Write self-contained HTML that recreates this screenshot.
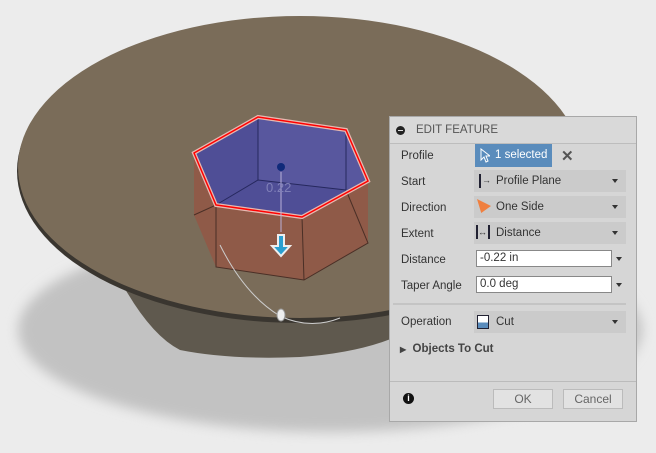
<!DOCTYPE html>
<html><head><style>
body{margin:0;width:656px;height:453px;overflow:hidden;background:#ececec;font-family:"Liberation Sans",sans-serif;position:relative}
svg.bg{position:absolute;left:0;top:0}
.p{position:absolute;left:389px;top:116px;width:248px;height:306px;background:#d6d6d6;border:1px solid #a8a8a8;box-sizing:border-box;font-size:11.5px;color:#333}
.hd{height:26px;border-bottom:1px solid #bdbdbd;background:#d9d9d9;line-height:26px;padding-left:26px;color:#555}
.hd:before{content:"";position:absolute;left:6px;top:9px;width:9px;height:9px;border-radius:50%;background:#222}
.hd:after{content:"";position:absolute;left:8px;top:13px;width:5px;height:1px;background:#ddd}
.l{position:absolute;left:11px}
.dd{position:absolute;left:84px;width:152px;height:22px;background:#cbcbcb;line-height:22px;padding-left:22px;box-sizing:border-box}
.dd:after{content:"";position:absolute;right:8px;top:9px;border:3px solid transparent;border-top:4px solid #333}
.in{position:absolute;left:86px;width:136px;height:17px;background:#fff;border:1px solid #888;box-sizing:border-box;line-height:15px;padding-left:3px}
.ar{position:absolute;left:226px;border:3px solid transparent;border-top:4px solid #333}
.btn{position:absolute;top:272px;height:18px;border:1px solid #bbb;background:#e2e2e2;line-height:18px;text-align:center;color:#666;font-size:12px}
</style></head><body>
<svg class="bg" width="656" height="453">
<defs><filter id="b"><feGaussianBlur stdDeviation="6"/></filter></defs>
<ellipse cx="330" cy="330" rx="312" ry="102" fill="#c2c2c2" filter="url(#b)"/>
<path d="M120 280 Q150 335 180 350 Q230 360 300 357 Q370 352 410 330 L410 250Z" fill="#5f594e"/>
<ellipse cx="300" cy="171" rx="283" ry="152" fill="#3a3630"/>
<ellipse cx="300" cy="167" rx="282" ry="151" fill="#7a6c59"/>
<polygon points="194,153 194,215 216,267 304,280 368,243 368,181 302,217 216,205" fill="#8f5a48"/>
<polyline points="194,215 216,205 216,267 304,280 368,243 346,190" fill="none" stroke="#4a2f26"/>
<line x1="302" y1="217" x2="304" y2="280" stroke="#4a2f26"/>
<polygon points="194,153 258,117 346,130 368,181 302,217 216,205" fill="#4f4e96"/>
<polygon points="258,117 346,130 368,181 346,190 258,180" fill="#58579e"/>
<polyline points="216,205 258,180 346,190" fill="none" stroke="#26285e"/>
<line x1="258" y1="117" x2="258" y2="180" stroke="#26285e"/>
<line x1="346" y1="130" x2="346" y2="190" stroke="#26285e"/>
<polygon points="194,153 258,117 346,130 368,181 302,217 216,205" fill="none" stroke="#e8b8b0" stroke-width="4"/>
<polygon points="194,153 258,117 346,130 368,181 302,217 216,205" fill="none" stroke="#f00" stroke-width="1.5"/>
<circle cx="281" cy="167" r="4" fill="#102a7a"/>
<line x1="281" y1="172" x2="281" y2="232" stroke="#b8b0d8" stroke-width="1"/>
<text x="266" y="192" font-family="Liberation Sans" font-size="13" fill="#8080b8">0.22</text>
<path d="M220 245 Q245 295 280 316 Q310 330 340 318" fill="none" stroke="#ccc" stroke-width="1"/>
<ellipse cx="281" cy="315" rx="4" ry="6" fill="#eee" stroke="#999"/>
<path d="M278 235 h6 v11 h6 l-9 10 l-9 -10 h6z" fill="#2a9fd0" stroke="#eee" stroke-width="2"/>
</svg>
<div class="p">
<div class="hd">EDIT FEATURE</div>
<div class="l" style="top:33px">Profile</div>
<div style="position:absolute;left:85px;top:27px;width:77px;height:23px;background:#5a8cbc;color:#fff;line-height:23px;padding-left:20px;box-sizing:border-box">1 selected</div>
<svg style="position:absolute;left:90px;top:31px" width="10" height="15"><path d="M1 1 L1 12 L4 9 L6 14 L8 13 L6 8 L10 8Z" fill="#5a8cbc" stroke="#fff" stroke-width="1"/></svg>
<div style="position:absolute;left:171px;top:30px;font-size:15px;color:#555;font-weight:bold">✕</div>
<div class="l" style="top:59px">Start</div>
<div class="dd" style="top:53px"><span style="position:absolute;left:5px;top:4px;width:2px;height:14px;background:#223"></span><span style="position:absolute;left:8px;top:-1px;font-size:9px">→</span>Profile Plane</div>
<div class="l" style="top:85px">Direction</div>
<div class="dd" style="top:79px"><span style="position:absolute;left:3px;top:3px;width:14px;height:14px;background:#f08040;clip-path:polygon(0 0,100% 50%,30% 100%)"></span>One Side</div>
<div class="l" style="top:111px">Extent</div>
<div class="dd" style="top:105px"><span style="position:absolute;left:2px;top:3px;width:14px;height:14px;border-left:2px solid #223;border-right:2px solid #223;box-sizing:border-box;font-size:9px;line-height:14px">↔</span>Distance</div>
<div class="l" style="top:137px">Distance</div>
<div class="in" style="top:133px">-0.22 in</div><div class="ar" style="top:140px"></div>
<div class="l" style="top:163px">Taper Angle</div>
<div class="in" style="top:159px">0.0 deg</div><div class="ar" style="top:166px"></div>
<div style="position:absolute;left:3px;top:186px;width:233px;height:2px;background:#c4c4c4"></div>
<div class="l" style="top:199px">Operation</div>
<div class="dd" style="top:194px"><span style="position:absolute;left:3px;top:4px;width:12px;height:14px;border:1px solid #223;background:linear-gradient(#fff 55%,#5a8cbc 55%);box-sizing:border-box"></span>Cut</div>
<div style="position:absolute;left:10px;top:226px;font-weight:bold;color:#444"><span style="font-size:8px">▶</span>&nbsp; Objects To Cut</div>
<div style="position:absolute;left:0;top:264px;width:246px;height:1px;background:#bbb"></div>
<div style="position:absolute;left:13px;top:276px;width:11px;height:11px;border-radius:50%;background:#111;color:#fff;font-size:9px;font-weight:bold;text-align:center;line-height:11px">i</div>
<div class="btn" style="left:103px;width:58px">OK</div>
<div class="btn" style="left:173px;width:58px">Cancel</div>
</div>
</body></html>
